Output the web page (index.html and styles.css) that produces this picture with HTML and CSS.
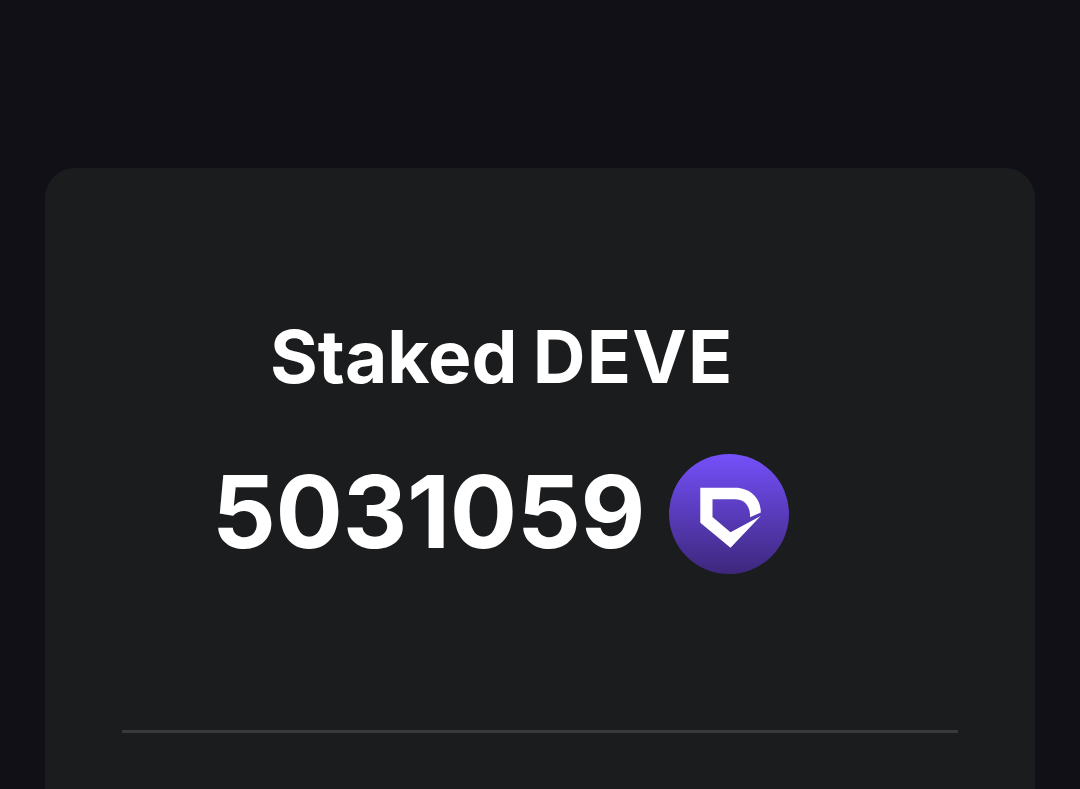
FILE: index.html
```html
<!DOCTYPE html>
<html lang="en">
<head>
<meta charset="utf-8">
<title>Staked DEVE</title>
<link rel="stylesheet" href="styles.css">
</head>
<body>
<main class="card">
  <h1 class="title">Staked <span class="symbol">DEVE</span></h1>
  <div class="amount">
    <span class="value">5031059</span>
    <svg class="token" viewBox="0 0 120 120" aria-hidden="true">
      <defs>
        <linearGradient id="disc" x1="0" y1="0" x2="0" y2="1">
          <stop offset="0" stop-color="#7450fa"/>
          <stop offset="1" stop-color="#3d277c"/>
        </linearGradient>
      </defs>
      <circle cx="60" cy="60" r="60" fill="url(#disc)"/>
      <path fill="#fff" d="M31.3 33.7H66C81 33.7 92 44 91.8 58.6L81 63.3C81.5 52 75.5 45.3 66 45.3H43.5V63L61.5 78.3L91.7 62L61.5 93.8L31.3 68.7Z"/>
    </svg>
  </div>
  <hr class="divider">
</main>
</body>
</html>
```
FILE: styles.css
```css
* { box-sizing: border-box; margin: 0; }
body {
  height: 789px;
  overflow: hidden;
  padding: 168px 45px 0;
  background: #111016;
  color: #fff;
  font-family: Inter, sans-serif;
}
.card {
  display: flex;
  flex-direction: column;
  height: 650px;
  padding: 142px 77px 0;
  border-radius: 30px;
  background: #1b1c1e;
}
.title {
  height: 94px;
  padding-left: 148px;
  font-size: 73px;
  line-height: 94px;
  font-weight: 700;
  word-spacing: -2px;
  white-space: nowrap;
}
.symbol { letter-spacing: 1.2px; }
.amount {
  display: flex;
  align-items: center;
  height: 120px;
  margin-top: 50px;
  padding-left: 90px;
}
.value {
  width: 457px;
  padding-bottom: 4px;
  font-size: 100px;
  line-height: 116px;
  font-weight: 700;
  letter-spacing: -0.3px;
}
.token { width: 120px; height: 120px; flex: none; }
.divider { width: 836px; height: 3px; margin-top: 156px; border: 0; background: #38393b; }
```
